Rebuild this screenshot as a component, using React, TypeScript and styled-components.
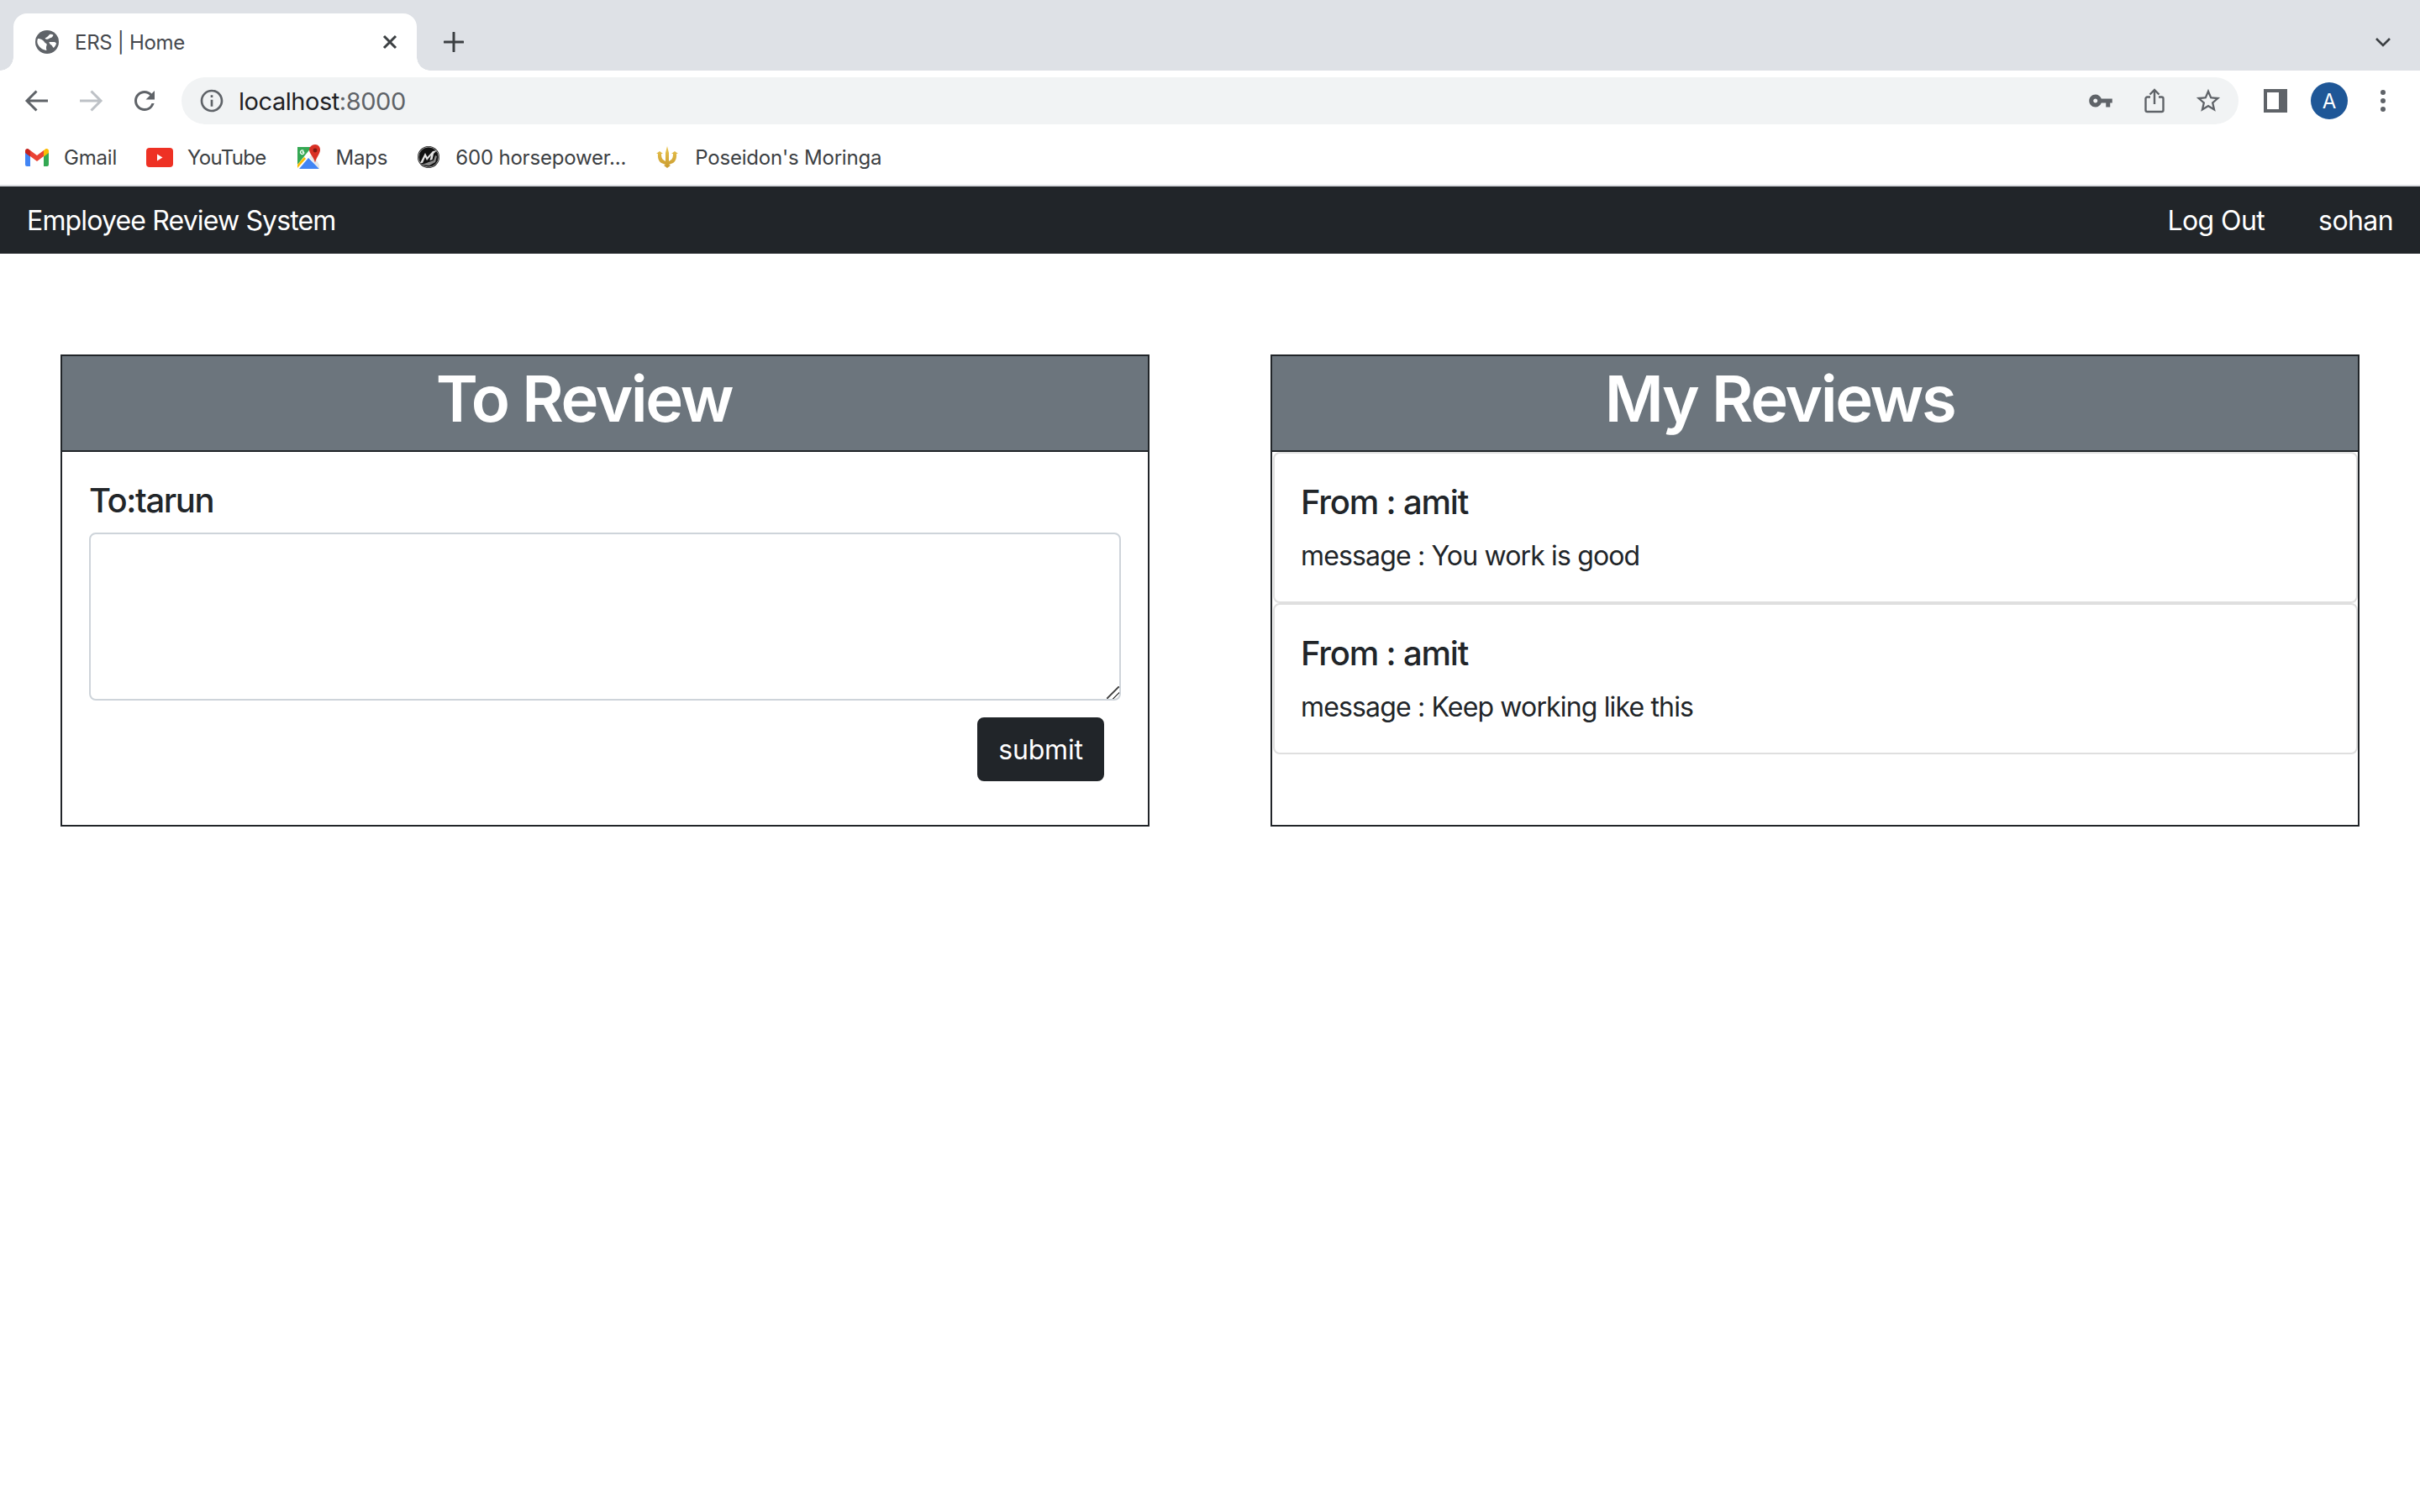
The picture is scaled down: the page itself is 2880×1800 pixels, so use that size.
import styled, { createGlobalStyle } from 'styled-components'

const GlobalStyle = createGlobalStyle`
  html, body {
    margin: 0;
    padding: 0;
    background: #fff;
    font-family: Inter, "Liberation Sans", sans-serif;
    color: #212529;
  }
  * { box-sizing: border-box; }
`

const TabStrip = styled.div`
  height: 84px;
  background: #dee1e6;
  display: flex;
  align-items: flex-end;
  padding-left: 16px;
`

const Tab = styled.div`
  position: relative;
  width: 480px;
  height: 68px;
  background: #fff;
  border-radius: 16px 16px 0 0;
  display: flex;
  align-items: center;
  padding: 0 20px 0 26px;
  color: #45484d;
  font-size: 24px;
  letter-spacing: -0.3px;
  &::before, &::after {
    content: '';
    position: absolute;
    bottom: 0;
    width: 16px;
    height: 16px;
    background: radial-gradient(circle at var(--cx) 0, #dee1e6 15.5px, #fff 16px);
  }
  &::before { left: -16px; --cx: 0; }
  &::after { right: -16px; --cx: 16px; }
`

const TabTitle = styled.span`
  flex: 1;
  margin-left: 19px;
`

const TabAction = styled.div<{ $grow?: boolean }>`
  display: flex;
  align-items: center;
  justify-content: center;
  height: 68px;
  width: 48px;
  flex: none;
  ${p => p.$grow ? 'margin-left: 20px;' : ''}
`

const StripSpacer = styled.div`
  flex: 1;
`

const StripEnd = styled(TabAction)`
  margin-right: 20px;
`

const Toolbar = styled.div`
  height: 72px;
  display: flex;
  align-items: center;
  padding: 0 12px;
  background: #fff;
`

const NavButton = styled.div`
  width: 64px;
  height: 56px;
  flex: none;
  display: flex;
  align-items: center;
  justify-content: center;
`

const Omnibox = styled.div`
  flex: 1;
  height: 56px;
  margin: 0 12px;
  border-radius: 28px;
  background: #f1f3f4;
  display: flex;
  align-items: center;
  padding: 0 4px;
`

const UrlText = styled.div`
  flex: 1;
  font-size: 29px;
  letter-spacing: -0.45px;
  color: #202124;
`

const UrlPort = styled.span`
  color: #5f6368;
`

const Avatar = styled.div`
  width: 44px;
  height: 44px;
  border-radius: 50%;
  background: #1f5797;
  color: #fff;
  font-size: 24px;
  display: flex;
  align-items: center;
  justify-content: center;
`

const BookmarkBar = styled.div`
  height: 66px;
  padding: 0 0 2px 30px;
  display: flex;
  align-items: center;
  background: #fff;
  border-bottom: 2px solid #dadce0;
`

const Bookmark = styled.div<{ $gap: number; $after: number; $track?: number }>`
  display: flex;
  align-items: center;
  font-size: 24px;
  letter-spacing: ${p => p.$track ?? -0.2}px;
  color: #3c4043;
  gap: ${p => p.$gap}px;
  margin-right: ${p => p.$after}px;
`

const Navbar = styled.nav`
  height: 80px;
  background: #212529;
  color: #fff;
  display: flex;
  align-items: center;
  justify-content: space-between;
  padding: 0 32px;
  font-size: 32px;
`

const Brand = styled.span`
  letter-spacing: -0.85px;
`

const NavLinks = styled.div`
  display: flex;
  gap: 64px;
  letter-spacing: -0.6px;
`

const Columns = styled.main`
  display: grid;
  grid-template-columns: 1296px 1296px;
  gap: 144px;
  padding: 120px 72px 0;
`

const Panel = styled.section`
  border: 2px solid #212529;
  display: flex;
  flex-direction: column;
`

const PanelHeader = styled.h1<{ $shift: number }>`
  margin: 0;
  height: 114px;
  background: #6c757d;
  border-bottom: 2px solid #212529;
  color: #fff;
  font-size: 76px;
  font-weight: 600;
  letter-spacing: -2.4px;
  line-height: 100px;
  text-align: center;
  padding-right: ${p => p.$shift}px;
`

const ReviewForm = styled.form`
  padding: 34px 32px 52px;
  display: flex;
  flex-direction: column;
`

const ToLabel = styled.label`
  font-size: 40px;
  font-weight: 500;
  letter-spacing: -1.4px;
  line-height: 48px;
  margin-bottom: 14px;
`

const Message = styled.textarea`
  display: block;
  width: 100%;
  height: 200px;
  padding: 12px 24px;
  border: 2px solid #ced4da;
  border-radius: 8px;
  font-size: 32px;
  font-family: inherit;
  resize: vertical;
  outline: none;
  &::-webkit-resizer {
    background: linear-gradient(135deg, transparent 0 46%, #555 46% 54%, transparent 54% 72%, #555 72% 80%, transparent 80%);
  }
`

const SubmitButton = styled.button`
  align-self: flex-end;
  margin: 20px 20px 0 0;
  width: 151px;
  height: 76px;
  border: 2px solid #212529;
  border-radius: 8px;
  background: #212529;
  color: #fff;
  font-family: inherit;
  font-size: 32px;
  letter-spacing: -0.2px;
  padding: 0;
`

const ReviewCard = styled.article`
  border: 2px solid #dfdfdf;
  border-radius: 8px;
  padding: 34px 32px 30px 31px;
  height: 180px;
  margin-left: 1px;
`

const ReviewFrom = styled.h5`
  margin: 0 0 16px;
  font-size: 40px;
  font-weight: 500;
  letter-spacing: -1.2px;
  line-height: 48px;
`

const ReviewMessage = styled.p`
  margin: 0;
  font-size: 32px;
  letter-spacing: -0.85px;
  line-height: 48px;
`

const GlobeIcon = () => (
  <svg width="28" height="28" viewBox="0 0 28 28">
    <circle cx="14" cy="14" r="14" fill="#5f6368" />
    <path fill="#fff" d="M3 10c2 0 4 .6 6 2 1.800 1.300 2 3 3.500 3.500 1.300.4 1.500 2 .8 3.300-.6 1.200-.3 3.500.2 5.200-4-.3-8-3-10-6.500C2 15 2 12.500 3 10zM17 5c2-.5 3.400-.2 4.500.7-.8 1.600-1.600 3-3.300 3.300-1.500.3-2.400 1.800-4 1.800-1.400 0-2.200-.6-2.700-1.400 2-.6 3.800-2.400 5.500-4.400zM16.500 14h5.500c1.400 0 2.500.6 3 1.600-.5 2.400-1.500 4-3.200 5.400-1.200-1-1.600-2.600-2.800-3.400-1.300-.8-2.600-2-2.500-3.600z" />
  </svg>
)

const CloseIcon = () => (
  <svg width="24" height="24" viewBox="0 0 24 24">
    <path d="M5 5l14 14M19 5L5 19" stroke="#3c4043" strokeWidth="3" fill="none" />
  </svg>
)

const PlusIcon = () => (
  <svg width="24" height="24" viewBox="0 0 24 24">
    <path d="M12 1v22M1 12h22" stroke="#3c4043" strokeWidth="3" fill="none" strokeLinecap="round" />
  </svg>
)

const ChevronIcon = () => (
  <svg width="20" height="14" viewBox="0 0 20 14">
    <path d="M2 3l8 8 8-8" stroke="#3c4043" strokeWidth="2.600" fill="none" />
  </svg>
)

const ArrowIcon = (props: { color: string; flip?: boolean }) => (
  <svg width="30" height="30" viewBox="0 0 30 30">
    <path
      d={props.flip ? 'M2 15h25M15.500 3.500L27 15 15.500 26.500' : 'M28 15H3M14.500 3.500L3 15l11.500 11.500'}
      stroke={props.color}
      strokeWidth="3"
      fill="none"
    />
  </svg>
)

const ReloadIcon = () => (
  <svg width="36" height="36" viewBox="0 0 24 24">
    <path fill="#5f6368" d="M17.650 6.350A7.958 7.958 0 0 0 12 4c-4.420 0-7.990 3.580-7.990 8s3.570 8 7.990 8c3.730 0 6.840-2.550 7.730-6h-2.080A5.990 5.990 0 0 1 12 18c-3.310 0-6-2.690-6-6s2.690-6 6-6c1.660 0 3.140.690 4.220 1.780L13 11h7V4l-2.350 2.350z" />
  </svg>
)

const InfoIcon = () => (
  <svg width="32" height="32" viewBox="0 0 24 24">
    <path fill="#5f6368" d="M11 7h2v2h-2zm0 4h2v6h-2zm1-9C6.480 2 2 6.480 2 12s4.480 10 10 10 10-4.480 10-10S17.520 2 12 2zm0 18c-4.410 0-8-3.590-8-8s3.590-8 8-8 8 3.590 8 8-3.590 8-8 8z" />
  </svg>
)

const KeyIcon = () => (
  <svg width="30" height="30" viewBox="0 0 24 24">
    <path fill="#5f6368" d="M12.650 10C11.830 7.670 9.610 6 7 6c-3.310 0-6 2.690-6 6s2.690 6 6 6c2.610 0 4.830-1.670 5.650-4H17v4h4v-4h2v-4H12.650zM7 14c-1.100 0-2-.9-2-2s.9-2 2-2 2 .9 2 2-.9 2-2 2z" />
  </svg>
)

const ShareIcon = () => (
  <svg width="24" height="30" viewBox="0 0 24 30" fill="none" stroke="#5f6368" strokeWidth="2.400">
    <path d="M7 10.500H3.500a2 2 0 0 0-2 2V26a2 2 0 0 0 2 2h17a2 2 0 0 0 2-2V12.500a2 2 0 0 0-2-2H17" />
    <path d="M12 19V2.500M6.500 7.500L12 2l5.500 5.500" />
  </svg>
)

const StarIcon = () => (
  <svg width="34" height="34" viewBox="0 0 24 24">
    <path fill="#5f6368" d="M22 9.240l-7.190-.62L12 2 9.190 8.630 2 9.240l5.460 4.730L5.820 21 12 17.270 18.180 21l-1.630-7.030L22 9.240zM12 15.400l-3.760 2.270 1-4.280-3.320-2.880 4.380-.38L12 6.100l1.710 4.040 4.380.38-3.320 2.880 1 4.280L12 15.400z" />
  </svg>
)

const SidePanelIcon = () => (
  <svg width="28" height="28" viewBox="0 0 28 28">
    <rect width="28" height="28" fill="#5f6368" />
    <rect x="4" y="4" width="14" height="20" fill="#fff" />
  </svg>
)

const DotsIcon = () => (
  <svg width="6" height="26" viewBox="0 0 6 26">
    <circle cx="3" cy="3" r="3" fill="#5f6368" />
    <circle cx="3" cy="13" r="3" fill="#5f6368" />
    <circle cx="3" cy="23" r="3" fill="#5f6368" />
  </svg>
)

const GmailIcon = () => (
  <svg width="28" height="22" viewBox="0 0 28 22">
    <path fill="#4285f4" d="M0 5v15a2 2 0 0 0 2 2h4V9z" />
    <path fill="#34a853" d="M22 9v13h4a2 2 0 0 0 2-2V5z" />
    <path fill="#ea4335" d="M6 3v7l8 6 8-6V3l-8 6z" />
    <path fill="#c5221f" d="M0 3.500V6l6 4.500V3L4 1.500C2.200.300 0 1.500 0 3.500z" />
    <path fill="#fbbc04" d="M22 3v7.500L28 6V3.500c0-2-2.200-3.200-4-2z" />
  </svg>
)

const YouTubeIcon = () => (
  <svg width="32" height="23" viewBox="0 0 32 23">
    <rect width="32" height="23" rx="4" fill="#ee3124" />
    <path fill="#fff" d="M13 7.500v8l6.500-4z" />
  </svg>
)

const MapsIcon = () => (
  <svg width="28" height="30" viewBox="0 0 28 30">
    <path fill="#35a853" d="M0 3h17L0 24z" />
    <path fill="#fbbc04" d="M0 24v4l10-11-2-2z" />
    <path fill="#4285f4" d="M2 29L13 16l13 13z" />
    <path fill="#e8e8e8" d="M14 15l4-3 8 12v5z" />
    <path fill="#d93025" d="M21 0c-4 0-7 3-7 6.500 0 4 5 8 7 15 2-7 6-11 6-15C27 3 25 0 21 0z" />
    <circle cx="21" cy="7" r="2.400" fill="#7e1a13" />
    <path fill="none" stroke="#fff" strokeWidth="1.300" d="M8 9.500a2.300 2.300 0 1 1-.7-2M5.500 9H8" />
  </svg>
)

const HorseLogo = () => (
  <svg width="26" height="26" viewBox="0 0 26 26">
    <circle cx="13" cy="13" r="13" fill="#111" />
    <circle cx="13" cy="13" r="12" fill="none" stroke="#9a9a9a" strokeWidth="1" />
    <path fill="#e6e6e6" d="M3 20L9 8l2.500 5L18 6l5-1-4 4-1.500 7-3 1 1.500-6-5 6-2-4-3 7z" />
    <path fill="#8c8c8c" d="M5 22l14-5 2-6 2 1-2 7-7 4z" />
  </svg>
)

const TridentLogo = () => (
  <svg width="26" height="26" viewBox="0 0 26 26">
    <defs>
      <linearGradient id="gold" x1="0" y1="0" x2="0" y2="1">
        <stop offset="0" stopColor="#eac64f" />
        <stop offset="1" stopColor="#c99a2e" />
      </linearGradient>
    </defs>
    <path
      fill="url(#gold)"
      d="M13 0l2 8v10l3-2c1.500-1.500 2-3.500 2-7h-2l4-3 4 3h-2c.5 5-1 9-4 11l-5 2 2 1-4 3-4-3 2-1-5-2c-3-2-4.500-6-4-11H0l4-3 4 3H6c0 3.500.5 5.500 2 7l3 2V8z"
    />
  </svg>
)

export default function App() {
  return (
    <>
      <GlobalStyle />
      <TabStrip>
        <Tab>
          <GlobeIcon />
          <TabTitle>ERS | Home</TabTitle>
          <CloseIcon />
        </Tab>
        <TabAction $grow><PlusIcon /></TabAction>
        <StripSpacer />
        <StripEnd><ChevronIcon /></StripEnd>
      </TabStrip>
      <Toolbar>
        <NavButton><ArrowIcon color="#5f6368" /></NavButton>
        <NavButton><ArrowIcon color="#bdc1c6" flip /></NavButton>
        <NavButton><ReloadIcon /></NavButton>
        <Omnibox>
          <NavButton><InfoIcon /></NavButton>
          <UrlText>localhost<UrlPort>:8000</UrlPort></UrlText>
          <NavButton><KeyIcon /></NavButton>
          <NavButton><ShareIcon /></NavButton>
          <NavButton><StarIcon /></NavButton>
        </Omnibox>
        <NavButton><SidePanelIcon /></NavButton>
        <NavButton><Avatar>A</Avatar></NavButton>
        <NavButton><DotsIcon /></NavButton>
      </Toolbar>
      <BookmarkBar>
        <Bookmark $gap={18} $after={35}><GmailIcon />Gmail</Bookmark>
        <Bookmark $gap={17} $after={37} $track={-0.7}><YouTubeIcon />YouTube</Bookmark>
        <Bookmark $gap={18} $after={36}><MapsIcon />Maps</Bookmark>
        <Bookmark $gap={19} $after={36}><HorseLogo />600 horsepower...</Bookmark>
        <Bookmark $gap={20} $after={0}><TridentLogo />Poseidon's Moringa</Bookmark>
      </BookmarkBar>
      <Navbar>
        <Brand>Employee Review System</Brand>
        <NavLinks>
          <span>Log Out</span>
          <span>sohan</span>
        </NavLinks>
      </Navbar>
      <Columns>
        <Panel>
          <PanelHeader $shift={50}>To Review</PanelHeader>
          <ReviewForm>
            <ToLabel>To:tarun</ToLabel>
            <Message />
            <SubmitButton type="button">submit</SubmitButton>
          </ReviewForm>
        </Panel>
        <Panel>
          <PanelHeader $shift={84}>My Reviews</PanelHeader>
          <ReviewCard>
            <ReviewFrom>From : amit</ReviewFrom>
            <ReviewMessage>message : You work is good</ReviewMessage>
          </ReviewCard>
          <ReviewCard>
            <ReviewFrom>From : amit</ReviewFrom>
            <ReviewMessage>message : Keep working like this</ReviewMessage>
          </ReviewCard>
        </Panel>
      </Columns>
    </>
  )
}
